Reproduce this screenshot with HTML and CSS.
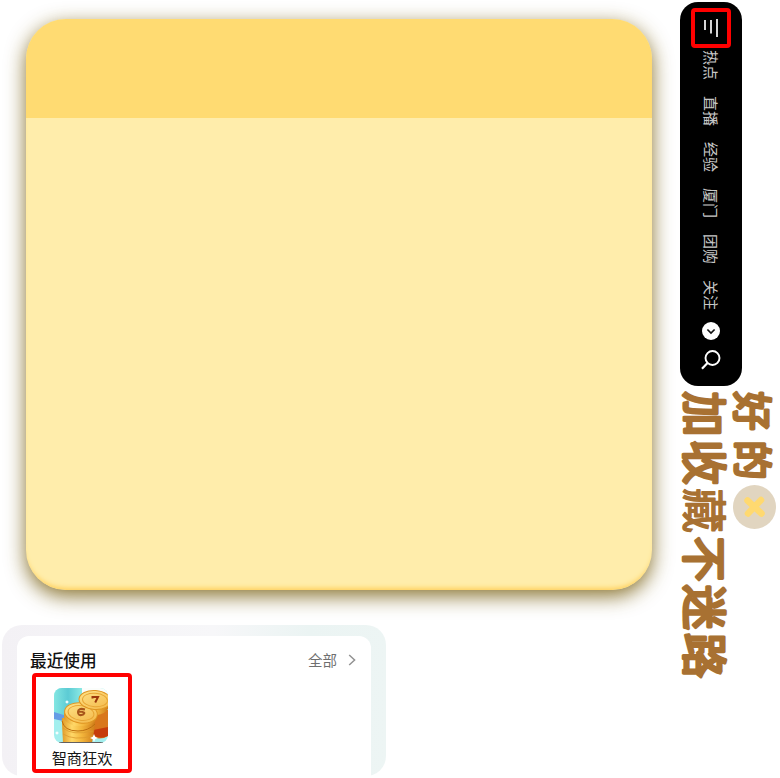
FILE: index.html
```
<!DOCTYPE html>
<html lang="zh-CN">
<head>
<meta charset="utf-8">
<title>收藏</title>
<link rel="stylesheet" href="styles.css">
</head>
<body>
<div class="page">
  <main class="main">
    <section class="card"><div class="card-head"></div></section>
    <section class="panel">
      <div class="recent">
        <header class="recent-head">
          <h2>最近使用</h2>
          <a class="all">全部
            <svg width="8" height="12" viewBox="0 0 8 12"><path d="M1.2 1 6.6 6 1.2 11" fill="none" stroke="#929292" stroke-width="1.5"/></svg>
          </a>
        </header>
        <div class="app">
          <svg class="app-icon" width="54" height="55" viewBox="0 0 54 55">
            <defs>
              <linearGradient id="gold" x1="0" x2="1"><stop offset="0" stop-color="#e09a28"/><stop offset=".3" stop-color="#ffd868"/><stop offset=".6" stop-color="#f3b63c"/><stop offset="1" stop-color="#d07c18"/></linearGradient>
              <linearGradient id="face" x1="0" y1="0" x2="1" y2="1"><stop offset="0" stop-color="#ffe58c"/><stop offset="1" stop-color="#f3b544"/></linearGradient>
              <linearGradient id="sea" x1="0" x2="1"><stop offset="0" stop-color="#83e6e2"/><stop offset=".5" stop-color="#5ccbd4"/><stop offset="1" stop-color="#8ce9e4"/></linearGradient>
            </defs>
            <rect width="54" height="55" fill="#a3efee"/>
            <rect width="28" height="30" fill="url(#sea)"/>
            <rect x="28" width="26" height="14" fill="#fbfdfb"/>
            <path d="M0 24 13 28V34L0 31Z" fill="#659ce5"/>
            <path d="M34 22H54V48Q46 53 36 48Z" fill="#d9771b"/>
            <path d="M39 42 54 39V48Q46 52 39 47Z" fill="#c63c0b"/>
            <path d="M26 13V20Q31 27 43 27 51 26 54 21V12Z" fill="url(#gold)"/>
            <path d="M8 30V36L9 55H38L41 38V28Z" fill="url(#gold)"/>
            <path d="M8 33Q10 43 24 43 34 43 41 36" fill="none" stroke="#bd6e10"/>
            <path d="M9 40Q18 48 39 43M9 46Q20 53 39 48" fill="none" stroke="#dc9a30" stroke-width=".8"/>
            <path d="M10 25V31Q15 39 29 38 39 37 43 31V24Z" fill="url(#gold)"/>
            <ellipse cx="27" cy="25" rx="16.5" ry="10" transform="rotate(8 27 25)" fill="url(#face)" stroke="#df9420"/>
            <ellipse cx="27" cy="25" rx="13" ry="7.3" transform="rotate(8 27 25)" fill="none" stroke="#e7a534"/>
            <path d="M31 21.500Q24 19.500 24 24T29 26.500Q33 24 25 23.5" fill="none" stroke="#a8561a" stroke-width="2.1"/>
            <ellipse cx="41" cy="12" rx="16" ry="9.5" transform="rotate(4 41 12)" fill="url(#face)" stroke="#df9420"/>
            <ellipse cx="41" cy="12" rx="12.5" ry="6.8" transform="rotate(4 41 12)" fill="none" stroke="#e7a534"/>
            <path d="M38.500 10.500V9H44L41.200 14.500" fill="none" stroke="#9d380b" stroke-width="2"/>
            <path d="M40 46 41.2 48.8 44 50 41.2 51.2 40 54 38.8 51.2 36 50 38.8 48.8ZM13 12 13.700 13.300 15 14 13.700 14.700 13 16 12.300 14.700 11 14 12.300 13.300ZM3 43 3.700 44.300 5 45 3.700 45.700 3 47 2.300 45.700 1 45 2.300 44.300Z" fill="#fff"/>
            <path d="M5 54.5H49" stroke="#625f60"/>
          </svg>
          <span class="app-name">智商狂欢</span>
        </div>
      </div>
    </section>
  </main>
  <aside class="side">
    <nav class="bar">
      <div class="menu">
        <svg width="16" height="20" viewBox="0 0 16 20"><path d="M2 2V12M8 2V15.500M14 1V19" stroke="#ededed" stroke-width="1.800" fill="none"/></svg>
      </div>
      <div class="tabs"><span>热点</span><span>直播</span><span>经验</span><span>厦门</span><span>团购</span><span>关注</span></div>
      <svg class="more" width="18" height="18" viewBox="0 0 18 18"><circle cx="9" cy="9" r="9" fill="#fff"/><path d="M5.4 7.500 9 11 12.600 7.500" fill="none" stroke="#111" stroke-width="1.7"/></svg>
      <svg class="search" width="20" height="20" viewBox="0 0 20 20"><circle cx="11.500" cy="8" r="7" fill="none" stroke="#fff" stroke-width="1.9"/><path d="M6.500 13 1 18.800" stroke="#fff" stroke-width="2.2"/></svg>
    </nav>
    <svg class="slogan" width="100" height="300" viewBox="0 0 100 300">
      <text class="ok" transform="translate(57.500 5.500) rotate(90)">好的</text>
      <text class="big" transform="translate(7.200 5.500) rotate(90)">加收<tspan class="dense">藏</tspan>不迷路</text>
      <ellipse cx="74.500" cy="121" rx="21.500" ry="22" fill="#e1d5c0"/>
      <path d="M67.500 114.500 81.500 127.500M81 114 68 127.500" stroke="#ffd970" stroke-width="6.500" stroke-linecap="round"/>
    </svg>
  </aside>
</div>
</body>
</html>
```
FILE: styles.css
```
* { box-sizing: border-box; }
body {
  margin: 0;
  background: #fff;
  font-family: "Noto Sans CJK SC", sans-serif;
}
h2, p { margin: 0; }
svg { display: block; flex: none; }
.page {
  display: grid;
  grid-template-columns: 680px 100px;
  width: 780px;
  height: 778px;
  overflow: hidden;
}
.main { padding: 19px 0 0 2px; }
.card {
  width: 626px;
  height: 571px;
  margin-left: 24px;
  border-radius: 40px;
  overflow: hidden;
  background: #ffedab;
  box-shadow: 0 6px 20px rgba(116, 91, 10, .85);
  position: relative;
}
.card::after {
  content: "";
  position: absolute;
  inset: 0;
  border-radius: inherit;
  box-shadow: inset 0 -5px 5px -3px #ffd05c;
}
.card-head { height: 99px; background: #ffdb72; }
.panel {
  width: 384px;
  height: 151px;
  margin-top: 35px;
  padding: 11px 15px 0;
  border-radius: 20px;
  background: linear-gradient(90deg, #f3f1f5, #f7f7f9 55%, #ebf4f3 80%, #edf5f4);
}
.recent {
  height: 140px;
  background: #fff;
  border-radius: 12px 12px 0 0;
}
.recent-head {
  display: flex;
  justify-content: space-between;
  align-items: center;
  height: 37px;
  padding: 11px 15px 1px 13px;
}
.recent-head h2 { font-size: 16.700px; font-weight: 500; line-height: 24px; color: #111; }
.all { display: flex; align-items: center; gap: 11px; font-size: 14.500px; color: #6f6f6f; }
.app {
  display: flex;
  flex-direction: column;
  align-items: center;
  width: 100px;
  height: 100px;
  margin-left: 15px;
  padding-top: 11px;
  border: 4px solid #f00;
  border-radius: 4px;
}
.app-icon { border-radius: 8px; margin-right: 2px; }
.app-name { margin-top: 3px; font-size: 15.200px; line-height: 22px; color: #151515; white-space: nowrap; }
.side { padding-top: 2px; }
.bar {
  display: flex;
  flex-direction: column;
  align-items: center;
  width: 62px;
  height: 384px;
  padding-top: 6px;
  border-radius: 18px;
  background: #000;
}
.menu {
  display: flex;
  align-items: center;
  justify-content: center;
  width: 40px;
  height: 40px;
  border: 4px solid #f00;
  border-radius: 4px;
}
.tabs {
  display: flex;
  flex-direction: column;
  gap: 16px;
  margin-top: 2px;
}
.tabs span {
  writing-mode: vertical-rl;
  text-orientation: sideways;
  height: 30px;
  font-size: 15px;
  line-height: 20px;
  color: #c8c8c8;
}
.more { margin-top: 12px; }
.search { margin-top: 10px; }
.slogan { overflow: visible; }
.slogan text {
  fill: #a87132;
  stroke: #a87132;
  stroke-width: 3.200px;
  stroke-linejoin: round;
  stroke-linecap: round;
  font-weight: 400;
}
.slogan .ok { font-size: 39px; letter-spacing: 10px; }
.slogan .big { font-size: 45px; letter-spacing: 3.300px; }
.slogan .dense { stroke-width: 1.500px; }
```
